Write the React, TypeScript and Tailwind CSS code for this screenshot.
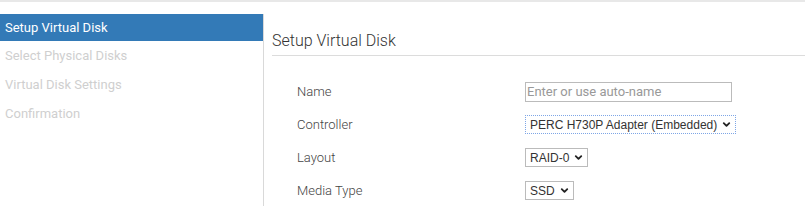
import { ChevronDown } from 'lucide-react'

const steps = ['Setup Virtual Disk', 'Select Physical Disks', 'Virtual Disk Settings', 'Confirmation']

function Chevron() {
  return <ChevronDown className="ml-[4px] h-[11px] w-[11px] text-[#222]" strokeWidth={4} />
}

function FakeSelect({ value, focused }: { value: string; focused?: boolean }) {
  return (
    <div
      className={`inline-flex h-[19px] items-center border pl-[4px] pr-[3px] text-[12px] text-[#333] ${
        focused ? 'border-dotted border-[#7ea6e6]' : 'border-[#bbb]'
      }`}
      style={{ fontFamily: '"Liberation Sans", Arial, sans-serif' }}
    >
      <span className="whitespace-nowrap">{value}</span>
      <Chevron />
    </div>
  )
}

export default function App() {
  const rows: { label: string; field: React.ReactNode }[] = [
    {
      label: 'Name',
      field: (
        <input
          placeholder="Enter or use auto-name"
          className="h-[20px] w-[207px] border border-[#bbb] px-[1px] text-[13px] text-[#333] outline-none placeholder:text-[#999]"
          style={{ fontFamily: 'Roboto, sans-serif' }}
        />
      ),
    },
    { label: 'Controller', field: <FakeSelect value="PERC H730P Adapter (Embedded)" focused /> },
    { label: 'Layout', field: <FakeSelect value="RAID-0" /> },
    { label: 'Media Type', field: <FakeSelect value="SSD" /> },
  ]

  return (
    <div
      className="h-[206px] w-[805px] overflow-hidden border-t-2 border-[#e8e8e8] bg-white"
      style={{ fontFamily: 'Roboto, "Noto Sans", sans-serif' }}
    >
      <div className="mt-[12px] flex h-full">
        {/* Wizard steps */}
        <div className="w-[264px] shrink-0 border-r border-[#d9d9d9]">
          {steps.map((s, i) => (
            <div
              key={s}
              className={`flex items-center pl-[5px] text-[13px] ${
                i === 0 ? 'h-[27px] bg-[#337ab7] text-white' : 'h-[29px] text-[#cfcfcf]'
              }`}
            >
              {s}
            </div>
          ))}
        </div>

        {/* Content */}
        <div className="flex-1 pl-[8px]">
          <h2 className="mt-[15px] border-b border-[#dcdcdc] pb-[2px] text-[16px] font-light text-[#333]">
            Setup Virtual Disk
          </h2>
          <div className="mt-[26px] flex flex-col gap-[14px] pl-[25px]">
            {rows.map(r => (
              <div key={r.label} className="flex h-[19px] items-center">
                <div className="w-[228px] text-[13px] font-light text-[#444]">{r.label}</div>
                {r.field}
              </div>
            ))}
          </div>
        </div>
      </div>
    </div>
  )
}
